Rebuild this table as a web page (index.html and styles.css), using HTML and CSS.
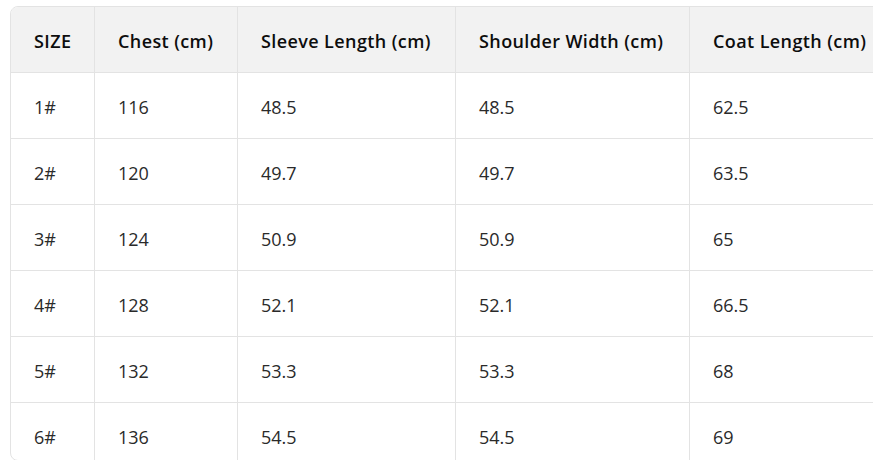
FILE: index.html
```html
<!DOCTYPE html>
<html>
<head>
<meta charset="utf-8">
<link rel="stylesheet" href="styles.css">
</head>
<body>
<div class="wrap">
<div class="frame">
<table class="size-table">
<colgroup>
<col class="c1"><col class="c2"><col class="c3"><col class="c4"><col class="c5">
</colgroup>
<thead>
<tr><th>SIZE</th><th>Chest (cm)</th><th>Sleeve Length (cm)</th><th>Shoulder Width (cm)</th><th>Coat Length (cm)</th></tr>
</thead>
<tbody>
<tr><td>1#</td><td>116</td><td>48.5</td><td>48.5</td><td>62.5</td></tr>
<tr><td>2#</td><td>120</td><td>49.7</td><td>49.7</td><td>63.5</td></tr>
<tr><td>3#</td><td>124</td><td>50.9</td><td>50.9</td><td>65</td></tr>
<tr><td>4#</td><td>128</td><td>52.1</td><td>52.1</td><td>66.5</td></tr>
<tr><td>5#</td><td>132</td><td>53.3</td><td>53.3</td><td>68</td></tr>
<tr><td>6#</td><td>136</td><td>54.5</td><td>54.5</td><td>69</td></tr>
</tbody>
</table>
</div>
</div>
</body>
</html>
```
FILE: styles.css
```css
html, body {
  margin: 0;
  padding: 0;
  background: #ffffff;
  overflow: hidden;
}
.wrap {
  padding: 6px 0 0 10px;
  width: 960px;
}
.frame {
  width: 906px;
  height: 455px;
  box-sizing: border-box;
  border: 1px solid #e3e3e3;
  border-radius: 8px;
  overflow: hidden;
}
.size-table {
  border-collapse: separate;
  border-spacing: 0;
  table-layout: fixed;
  width: 904px;
  font-family: "Open Sans", "Noto Sans", sans-serif;
  font-size: 18px;
}
.c1 { width: 84px; }
.c2 { width: 143px; }
.c3 { width: 218px; }
.c4 { width: 234px; }
.c5 { width: 225px; }
.size-table th,
.size-table td {
  height: 66px;
  box-sizing: border-box;
  padding: 0 4px 0 23px;
  text-align: left;
  vertical-align: middle;
  border-right: 1px solid #e3e3e3;
  border-bottom: 1px solid #e3e3e3;
  white-space: nowrap;
  overflow: hidden;
}
.size-table th {
  background: #f2f2f2;
  font-weight: 600;
  color: #0d0d0d;
  padding-top: 3px;
  letter-spacing: 0.4px;
}
.size-table td {
  color: #2a2a2a;
  font-weight: 400;
  padding-top: 2px;
}
.size-table th:last-child,
.size-table td:last-child {
  border-right: none;
}
```
